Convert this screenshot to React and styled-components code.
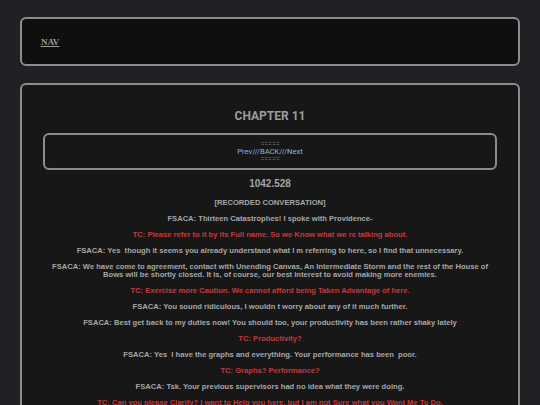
import React from 'react';
import styled, { createGlobalStyle } from 'styled-components';

const lines = [
    { who: 'fsaca', text: 'FSACA: Thirteen Catastrophes! I spoke with Providence-' },
    { who: 'tc', text: 'TC: Please refer to it by its Full name. So we Know what we re talking about.' },
    { who: 'fsaca', text: 'FSACA: Yes  though it seems you already understand what I m referring to here, so I find that unnecessary.' },
    { who: 'fsaca', text: 'FSACA: We have come to agreement, contact with Unending Canvas, An Intermediate Storm and the rest of the House of Bows will be shortly closed. It is, of course, our best interest to avoid making more enemies.' },
    { who: 'tc', text: 'TC: Exercise more Caution. We cannot afford being Taken Advantage of here.' },
    { who: 'fsaca', text: 'FSACA: You sound ridiculous, I wouldn t worry about any of it much further.' },
    { who: 'fsaca', text: 'FSACA: Best get back to my duties now! You should too, your productivity has been rather shaky lately' },
    { who: 'tc', text: 'TC: Productivity?' },
    { who: 'fsaca', text: 'FSACA: Yes  I have the graphs and everything. Your performance has been  poor.' },
    { who: 'tc', text: 'TC: Graphs? Performance?' },
    { who: 'fsaca', text: 'FSACA: Tsk. Your previous supervisors had no idea what they were doing.' },
    { who: 'tc', text: 'TC: Can you please Clarify? I want to Help you here, but I am not Sure what you Want Me To Do.' },
];

function App() {
    return (
        <>
            <Global />
            <Page>
                <NavBar>
                    <NavLink href="#">NAV</NavLink>
                </NavBar>
                <Main>
                    <Title>CHAPTER 11</Title>
                    <Pager>
                        <Rule>=====</Rule>
                        <PagerLinks>
                            <a href="#">Prev</a>///<a href="#">BACK</a>///<a href="#">Next</a>
                        </PagerLinks>
                        <Rule>=====</Rule>
                    </Pager>
                    <Stamp>1042.528</Stamp>
                    <Line>[RECORDED CONVERSATION]</Line>
                    {lines.map((l, i) => (
                        <Line key={i} $red={l.who === 'tc'}>{l.text}</Line>
                    ))}
                </Main>
            </Page>
        </>
    )
}

export default App

const Global = createGlobalStyle`
    html, body {
        margin: 0;
        background: #202124;
    }
`;
const Page = styled.div`
    padding: 17px 20px 0;
    display: flex;
    flex-direction: column;
    gap: 17px;
`;
const NavBar = styled.nav`
    background: #0f0f0f;
    border: 2px solid #8c8c8c;
    border-radius: 6px;
    height: 45px;
    padding: 0 19px;
    display: flex;
    align-items: center;
`;
const NavLink = styled.a`
    font-family: "Liberation Serif", serif;
    font-size: 9px;
    font-weight: bold;
    color: #9a9a9a;
    text-decoration: underline;
`;
const Main = styled.main`
    background: #171717;
    border: 2px solid #8c8c8c;
    border-bottom: none;
    border-radius: 6px 6px 0 0;
    padding: 24px 21px 0;
    font-family: "Liberation Sans", Arial, sans-serif;
    text-align: center;
    height: 320px;
    overflow: hidden;
`;
const Title = styled.h1`
    font-family: Roboto, "Liberation Sans", sans-serif;
    font-size: 12px;
    font-weight: bold;
    color: #9c9c9c;
    margin: 0 0 10px;
    line-height: 14px;
`;
const Pager = styled.div`
    border: 2px solid #8c8c8c;
    border-radius: 6px;
    height: 33px;
    display: flex;
    flex-direction: column;
    justify-content: center;
    align-items: center;
    font-family: Roboto, "Liberation Sans", sans-serif;
    font-size: 7.6px;
    line-height: 7.5px;
    color: #8ab4d4;
    margin-bottom: 8px;
`;
const Rule = styled.div`
    color: #777;
    font-size: 7px;
    line-height: 6.5px;
`;
const PagerLinks = styled.div`
    line-height: 8px;
    a {
        color: #8ab4d4;
        text-decoration: none;
    }
`;
const Stamp = styled.div`
    font-size: 10px;
    font-weight: bold;
    color: #a4a4a4;
    line-height: 12px;
    margin-bottom: 9px;
`;
const Line = styled.p`
    font-size: 7.6px;
    font-weight: bold;
    line-height: 8px;
    margin: 0 0 8px;
    white-space: pre-wrap;
    color: ${p => p.$red ? '#c23a3c' : '#a6a6a6'};
`;
